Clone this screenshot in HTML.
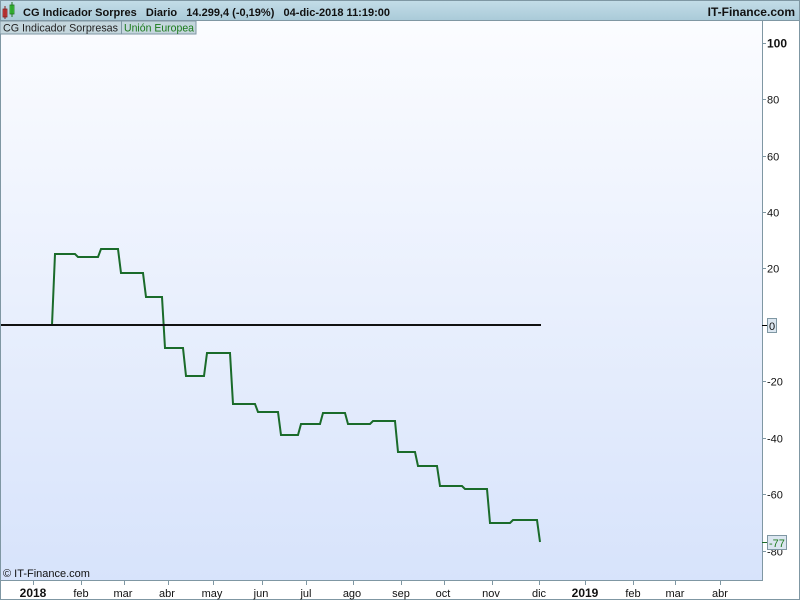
<!DOCTYPE html>
<html><head><meta charset="utf-8"><style>
body{margin:0;width:800px;height:600px;overflow:hidden;font-family:"Liberation Sans",sans-serif}
</style></head><body>
<svg width="800" height="600" xmlns="http://www.w3.org/2000/svg" font-family="Liberation Sans, sans-serif">
<defs>
<linearGradient id="hd" x1="0" y1="0" x2="0" y2="1"><stop offset="0" stop-color="#c4dde8"/><stop offset="1" stop-color="#a9cad8"/></linearGradient>
<linearGradient id="bg" x1="0" y1="0" x2="0" y2="1"><stop offset="0" stop-color="#fbfcff"/><stop offset="1" stop-color="#d7e3fb"/></linearGradient>
</defs>
<rect width="800" height="600" fill="#fff"/>
<rect x="0" y="0" width="800" height="21" fill="url(#hd)"/>
<line x1="0" y1="20.5" x2="800" y2="20.5" stroke="#7f97a3"/>
<rect x="1" y="21" width="761" height="560" fill="url(#bg)"/>
<rect x="0.5" y="0.5" width="799" height="599" fill="none" stroke="#7f97a3"/>
<line x1="762.5" y1="21" x2="762.5" y2="581" stroke="#7f97a3"/>
<line x1="0" y1="580.5" x2="763" y2="580.5" stroke="#7f97a3"/>
<rect x="3" y="9" width="4" height="8" fill="#e04040" stroke="#802020" stroke-width="0.8"/>
<line x1="5" y1="6" x2="5" y2="19" stroke="#802020"/>
<rect x="10" y="5" width="4" height="9" fill="#40e040" stroke="#207020" stroke-width="0.8"/>
<line x1="12" y1="2" x2="12" y2="17" stroke="#207020"/>
<text x="23" y="16" font-size="11.3" font-weight="bold" fill="#111" textLength="367" lengthAdjust="spacingAndGlyphs">CG Indicador Sorpres&#160;&#160;&#160;Diario&#160;&#160;&#160;14.299,4 (-0,19%)&#160;&#160;&#160;04-dic-2018 11:19:00</text>
<text x="795" y="16" font-size="12" font-weight="bold" fill="#111" text-anchor="end">IT-Finance.com</text>
<rect x="0" y="21" width="196" height="13" fill="#c4d6dd" stroke="#7f97a3"/>
<line x1="121.5" y1="21" x2="121.5" y2="34" stroke="#7f97a3"/>
<text x="3" y="31.5" font-size="11" fill="#222" textLength="115" lengthAdjust="spacingAndGlyphs">CG Indicador Sorpresas</text>
<text x="124" y="31.5" font-size="11" fill="#1a7a1a" textLength="70" lengthAdjust="spacingAndGlyphs">Unión Europea</text>
<g stroke="#7f97a3">
<line x1="762" y1="43.5" x2="766" y2="43.5"/><line x1="762" y1="99.5" x2="766" y2="99.5"/><line x1="762" y1="156.5" x2="766" y2="156.5"/><line x1="762" y1="212.5" x2="766" y2="212.5"/><line x1="762" y1="268.5" x2="766" y2="268.5"/><line x1="762" y1="381.5" x2="766" y2="381.5"/><line x1="762" y1="438.5" x2="766" y2="438.5"/><line x1="762" y1="494.5" x2="766" y2="494.5"/><line x1="762" y1="551.5" x2="766" y2="551.5"/>
</g>
<g font-size="11" fill="#111">
<text x="767" y="47.5" font-weight="bold" font-size="12">100</text>
<text x="767" y="103.5">80</text><text x="767" y="160.5">60</text><text x="767" y="216.5">40</text><text x="767" y="272.5">20</text>
<text x="767" y="385.5">-20</text><text x="767" y="442.5">-40</text><text x="767" y="498.5">-60</text><text x="767" y="555.5">-80</text>
</g>
<line x1="762" y1="325.5" x2="767" y2="325.5" stroke="#000"/>
<rect x="767.5" y="318.5" width="9" height="14" fill="#dbe6f0" stroke="#7f97a3"/>
<text x="769" y="330" font-size="11" fill="#111">0</text>
<line x1="762" y1="542.5" x2="767" y2="542.5" stroke="#1a6b2a"/>
<rect x="767.5" y="535.5" width="19" height="14" fill="#dbe6f0" stroke="#7f97a3"/>
<text x="769" y="547" font-size="11" fill="#1a7a1a">-77</text>
<polyline fill="none" stroke="#1a6b2a" stroke-width="2" points="1,325 52,325 55,254 75,254 78,257 98,257 101,249 118,249 121,273 143,273 146,297 162,297 165,348 183,348 186,376 204,376 207,353 230,353 233,404 255,404 258,412 278,412 281,435 298,435 301,424 320,424 323,413 345,413 348,424 370,424 373,421 395,421 398,452 415,452 418,466 437,466 440,486 462,486 465,489 487,489 490,523 510,523 513,520 537,520 540,542"/>
<line x1="1" y1="325" x2="541" y2="325" stroke="#111" stroke-width="2"/>
<text x="3" y="577" font-size="11" fill="#111">© IT-Finance.com</text>
<g stroke="#7f97a3">
<line x1="33.5" y1="581" x2="33.5" y2="585"/><line x1="81.5" y1="581" x2="81.5" y2="585"/><line x1="124.5" y1="581" x2="124.5" y2="585"/><line x1="168.5" y1="581" x2="168.5" y2="585"/><line x1="213.5" y1="581" x2="213.5" y2="585"/><line x1="262.5" y1="581" x2="262.5" y2="585"/><line x1="306.5" y1="581" x2="306.5" y2="585"/><line x1="353.5" y1="581" x2="353.5" y2="585"/><line x1="401.5" y1="581" x2="401.5" y2="585"/><line x1="444.5" y1="581" x2="444.5" y2="585"/><line x1="492.5" y1="581" x2="492.5" y2="585"/><line x1="539.5" y1="581" x2="539.5" y2="585"/><line x1="585.5" y1="581" x2="585.5" y2="585"/><line x1="633.5" y1="581" x2="633.5" y2="585"/><line x1="675.5" y1="581" x2="675.5" y2="585"/><line x1="720.5" y1="581" x2="720.5" y2="585"/>
</g>
<g font-size="11" fill="#111" text-anchor="middle">
<text x="33" y="597" font-weight="bold" font-size="12">2018</text>
<text x="81" y="597">feb</text><text x="123" y="597">mar</text><text x="167" y="597">abr</text><text x="212" y="597">may</text><text x="261" y="597">jun</text><text x="306" y="597">jul</text><text x="352" y="597">ago</text><text x="401" y="597">sep</text><text x="443" y="597">oct</text><text x="491" y="597">nov</text><text x="539" y="597">dic</text>
<text x="585" y="597" font-weight="bold" font-size="12">2019</text>
<text x="633" y="597">feb</text><text x="675" y="597">mar</text><text x="720" y="597">abr</text>
</g>
</svg>
</body></html>
